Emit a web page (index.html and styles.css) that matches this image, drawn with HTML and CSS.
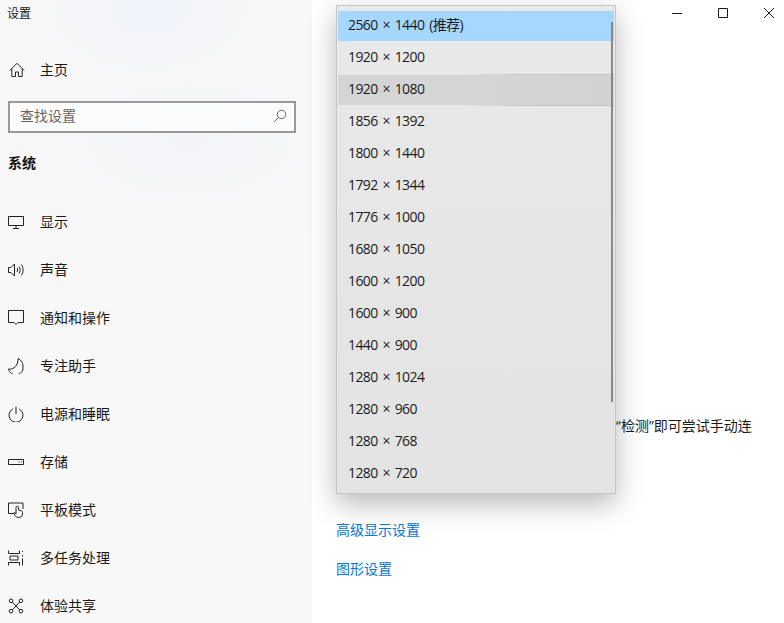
FILE: index.html
```html
<!DOCTYPE html>
<html lang="zh-CN">
<head>
<meta charset="utf-8">
<title>设置</title>
<link rel="stylesheet" href="styles.css">
</head>
<body>
<div class="window">
  <aside class="sidebar">
    <div class="app-title">设置</div>
    <a class="nav-row home-row">
      <svg class="icon" viewBox="0 0 16 16"><path d="M.8 8.500 8 1.300l7.200 7.200M2.800 6.800v7.700h3.700V10h3v4.500h3.700V6.800"/></svg>
      <span>主页</span>
    </a>
    <div class="search">
      <span>查找设置</span>
      <svg class="search-icon" viewBox="0 0 14 14"><circle cx="8.500" cy="5.500" r="4.200"/><path d="M5.500 8.500 1 13"/></svg>
    </div>
    <h2 class="section">系统</h2>
    <nav>
      <a class="nav-row">
        <svg class="icon" viewBox="0 0 16 16"><path d="M.5 2.500h15v9H.5zM8 11.500v2.500M5 14.500h6"/></svg>
        <span>显示</span>
      </a>
      <a class="nav-row">
        <svg class="icon" viewBox="0 0 16 16"><path d="M.5 5.500h2.500L6.500 2v12L3 10.500H.5zM9 6c.8 1.200.8 2.800 0 4M11 4.500c1.500 2.200 1.500 4.800 0 7M13.300 2.500c2.400 3.300 2.400 7.700 0 11"/></svg>
        <span>声音</span>
      </a>
      <a class="nav-row">
        <svg class="icon" viewBox="0 0 16 16"><path d="M.5.500h15v12h-5.500L8 14.500l-2-2H.5z"/></svg>
        <span>通知和操作</span>
      </a>
      <a class="nav-row">
        <svg class="icon" viewBox="0 0 16 16"><path d="M10 .5c3 1.500 5 4 5 7.500a7.200 7.200 0 0 1-14.500 3c5.500 1 10-4 9.500-10.500z"/></svg>
        <span>专注助手</span>
      </a>
      <a class="nav-row">
        <svg class="icon" viewBox="0 0 16 16"><path d="M8 .5v7.500M4.800 3a7 7 0 1 0 6.400 0"/></svg>
        <span>电源和睡眠</span>
      </a>
      <a class="nav-row">
        <svg class="icon" viewBox="0 0 16 16"><path d="M.5 5.500h15v5H.5zM10.500 8h1M13 8h1"/></svg>
        <span>存储</span>
      </a>
      <a class="nav-row">
        <svg class="icon" viewBox="0 0 16 16"><path d="M5.500 11.500H.5V1h14.500v6M8 12V5.500a1.300 1.300 0 0 1 2.600 0V8l2.800.8c.8.300 1.100 1 1.100 1.700v1.500a3.500 3.500 0 0 1-3.500 3.500h-.7a3.500 3.500 0 0 1-3-1.700L5.500 11c.5-.8 1.500-.5 2.500 1"/></svg>
        <span>平板模式</span>
      </a>
      <a class="nav-row">
        <svg class="icon" viewBox="0 0 16 16"><path d="M.5.500v3h11v-3M2 6h8v4H2zM.5 15.500v-3h11v3M14.500 1v1M14.500 5v1.500M14.500 8.500v7"/></svg>
        <span>多任务处理</span>
      </a>
      <a class="nav-row">
        <svg class="icon" viewBox="0 0 16 16"><circle cx="3" cy="2.800" r="1.800"/><circle cx="13" cy="2.800" r="1.800"/><circle cx="3" cy="13.200" r="1.800"/><circle cx="13" cy="13.200" r="1.800"/><path d="M4.300 4.100 11.700 11.900M11.700 4.100 4.300 11.900"/></svg>
        <span>体验共享</span>
      </a>
    </nav>
  </aside>
  <main class="content">
    <div class="controls">
      <svg class="ctl" viewBox="0 0 10 10"><path d="M0 5.500h10"/></svg>
      <svg class="ctl" viewBox="0 0 10 10"><path d="M.5.500h9v9h-9z"/></svg>
      <svg class="ctl" viewBox="0 0 10 10"><path d="m0 0 10 10M10 0 0 10"/></svg>
    </div>
    <p class="note">“检测”即可尝试手动连</p>
    <a class="link first-link">高级显示设置</a>
    <a class="link second-link">图形设置</a>
    <ul class="menu">
      <li class="selected">2560 × 1440 (推荐)</li>
      <li>1920 × 1200</li>
      <li class="hovered">1920 × 1080</li>
      <li>1856 × 1392</li>
      <li>1800 × 1440</li>
      <li>1792 × 1344</li>
      <li>1776 × 1000</li>
      <li>1680 × 1050</li>
      <li>1600 × 1200</li>
      <li>1600 × 900</li>
      <li>1440 × 900</li>
      <li>1280 × 1024</li>
      <li>1280 × 960</li>
      <li>1280 × 768</li>
      <li>1280 × 720</li>
    </ul>
    <div class="thumb"></div>
  </main>
</div>
</body>
</html>
```
FILE: styles.css
```css
* { box-sizing: border-box; }
html, body { margin: 0; height: 100%; overflow: hidden; background: #fff; }
body {
  font-family: "Open Sans", "Noto Sans CJK SC", sans-serif;
  font-size: 14px;
  line-height: 20px;
  color: #1a1a1a;
}
.window { display: flex; width: 784px; height: 623px; overflow: hidden; }
.sidebar {
  width: 312px;
  flex: none;
  padding-left: 8px;
  background:
    radial-gradient(ellipse 110px 70px at 150px 10px, #eff3fb 0%, rgba(239,243,251,0) 100%),
    radial-gradient(ellipse 130px 70px at 190px 140px, #f2f4f9 0%, rgba(242,244,249,0) 100%),
    linear-gradient(180deg, #f7f7f8 0%, #f8f8f8 100%);
}
.app-title { height: 26px; margin-left: -1px; padding-top: 4px; font-size: 12px; }
.nav-row { display: flex; align-items: center; gap: 16px; height: 48px; color: #1a1a1a; }
.home-row { margin-top: 20px; padding-left: 1px; gap: 15px; }
.icon { width: 16px; height: 16px; flex: none; fill: none; stroke: #222; stroke-width: 1; }
.search {
  display: flex;
  align-items: center;
  justify-content: space-between;
  width: 288px;
  height: 32px;
  margin-top: 7px;
  padding: 0 7px 2px 10px;
  border: 2px solid #999;
  background: rgba(255,255,255,.55);
  color: #666;
}
.search-icon { width: 14px; height: 14px; fill: none; stroke: #666; stroke-width: 1; }
.section { margin: 20px 0 25px; font-size: 14px; line-height: 20px; font-weight: 700; color: #111; }
.content { position: relative; flex: 1; padding-left: 24px; }
.controls { display: flex; justify-content: flex-end; gap: 36px; height: 32px; padding: 8px 10px 0 0; }
.ctl { width: 10px; height: 10px; fill: none; stroke: #1a1a1a; stroke-width: 1; }
.note { height: 40px; margin: 384px 0 0; padding-left: 280px; white-space: nowrap; }
.link { display: block; color: #0078d4; }
.first-link { margin-top: 64px; }
.second-link { margin-top: 19px; }
.menu {
  position: absolute;
  left: 24px;
  top: 5px;
  width: 280px;
  height: 489px;
  margin: 0;
  padding: 5px 1px 4px;
  list-style: none;
  border: 1px solid #c6c6c6;
  background: linear-gradient(180deg, #e9e9e9 0%, #e3e3e3 100%);
  box-shadow: 0 10px 26px rgba(0,0,0,.28);
}
.menu li {
  position: relative;
  height: 30px;
  margin-bottom: 2px;
  padding-left: 10px;
  line-height: 28px;
  letter-spacing: -.6px;
  word-spacing: 1.8px;
  color: #1c1c1c;
  white-space: nowrap;
}
.menu .selected { background: #a6d7ff; }
.menu .hovered { background: linear-gradient(90deg, #d5d5d5 0%, #d5d5d5 50%, #d2d2d2 100%); }
.menu .hovered::after {
  content: "";
  position: absolute;
  left: 45%;
  right: 0;
  top: -1px;
  bottom: -1px;
  border-top: 1px solid #c6c6c6;
  border-bottom: 1px solid #c2c2c2;
  border-image: linear-gradient(90deg, transparent, #c4c4c4 40%) 1;
  border-left: 0;
  border-right: 0;
}
.thumb { position: absolute; left: 299px; top: 22px; width: 2px; height: 380px; background: #888; }
```
